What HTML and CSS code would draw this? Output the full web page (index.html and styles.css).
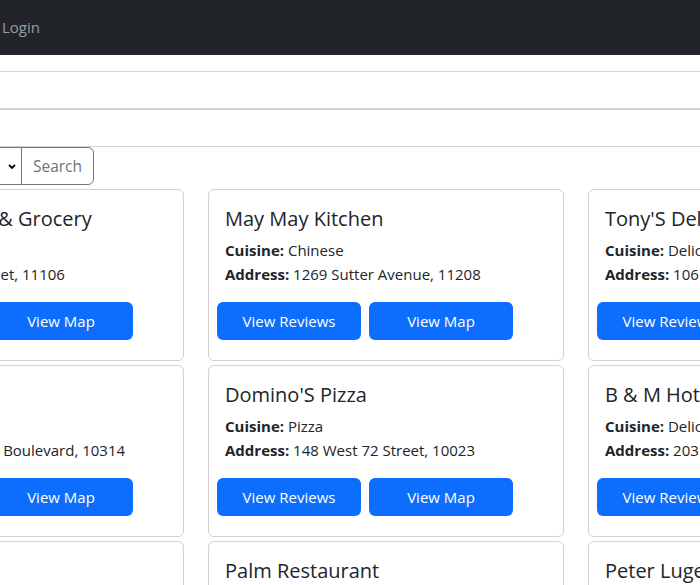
FILE: index.html
```html
<!DOCTYPE html>
<html lang="en">
<head>
<meta charset="utf-8">
<title>Restaurants</title>
<link rel="stylesheet" href="styles.css">
</head>
<body>
<div class="canvas">
  <nav class="navbar">
    <a class="brand" href="#">Restaurants</a>
    <a class="nav-link" href="#">Login</a>
  </nav>
  <main class="container">
    <form class="search-form">
      <input class="form-control" type="text" placeholder="Name">
      <input class="form-control" type="text" placeholder="Zipcode">
      <div class="input-group">
        <div class="select">
          <span class="select-text">All Cuisines</span>
          <svg class="chev" width="8" height="5" viewBox="0 0 8 5"><polyline points="1,1 4,4 7,1" fill="none" stroke="#000" stroke-width="1.8"/></svg>
        </div>
        <button type="button" class="btn-search">Search</button>
      </div>
    </form>
    <div class="cards">
      <div class="card">
        <h5 class="card-title">Broadway's Deli &amp; Grocery</h5>
        <p class="card-text"><b>Cuisine:</b> Delicatessen<br><b>Address:</b> 3015 31 Street, 11106</p>
        <div class="actions"><a class="btn">View Reviews</a><a class="btn">View Map</a></div>
      </div>
      <div class="card">
        <h5 class="card-title">May May Kitchen</h5>
        <p class="card-text"><b>Cuisine:</b> Chinese<br><b>Address:</b> 1269 Sutter Avenue, 11208</p>
        <div class="actions"><a class="btn">View Reviews</a><a class="btn">View Map</a></div>
      </div>
      <div class="card">
        <h5 class="card-title">Tony'S Deli</h5>
        <p class="card-text"><b>Cuisine:</b> Delicatessen<br><b>Address:</b> 1061 Atlantic Avenue, 11238</p>
        <div class="actions"><a class="btn">View Reviews</a><a class="btn">View Map</a></div>
      </div>
      <div class="card">
        <h5 class="card-title">Wendy'S</h5>
        <p class="card-text"><b>Cuisine:</b> Hamburgers<br><b>Address:</b> 1853 Victory Boulevard, 10314</p>
        <div class="actions"><a class="btn">View Reviews</a><a class="btn">View Map</a></div>
      </div>
      <div class="card">
        <h5 class="card-title">Domino'S Pizza</h5>
        <p class="card-text"><b>Cuisine:</b> Pizza<br><b>Address:</b> 148 West 72 Street, 10023</p>
        <div class="actions"><a class="btn">View Reviews</a><a class="btn">View Map</a></div>
      </div>
      <div class="card">
        <h5 class="card-title">B &amp; M Hot Bagel</h5>
        <p class="card-text"><b>Cuisine:</b> Delicatessen<br><b>Address:</b> 203 Columbus Avenue, 10023</p>
        <div class="actions"><a class="btn">View Reviews</a><a class="btn">View Map</a></div>
      </div>
      <div class="card">
        <h5 class="card-title">Carvel</h5>
        <p class="card-text"><b>Cuisine:</b> Ice Cream<br><b>Address:</b> 705 Kings Highway, 11223</p>
        <div class="actions"><a class="btn">View Reviews</a><a class="btn">View Map</a></div>
      </div>
      <div class="card">
        <h5 class="card-title">Palm Restaurant</h5>
        <p class="card-text"><b>Cuisine:</b> American<br><b>Address:</b> 837 2 Avenue, 10017</p>
        <div class="actions"><a class="btn">View Reviews</a><a class="btn">View Map</a></div>
      </div>
      <div class="card">
        <h5 class="card-title">Peter Luger Steakhouse</h5>
        <p class="card-text"><b>Cuisine:</b> Steak<br><b>Address:</b> 178 Broadway, 11211</p>
        <div class="actions"><a class="btn">View Reviews</a><a class="btn">View Map</a></div>
      </div>
    </div>
  </main>
</div>
</body>
</html>
```

FILE: styles.css
```css
html, body {
  margin: 0;
  padding: 0;
  overflow: hidden;
  background: #fff;
}
body {
  font-family: "Open Sans", "Noto Sans", sans-serif;
  font-size: 15px;
  line-height: 24px;
  color: #212529;
}
.canvas {
  width: 1140px;
  margin-left: -184px;
}
.navbar {
  height: 55px;
  background: #212529;
  display: flex;
  align-items: center;
}
.brand {
  width: 178px;
  color: #212529;
  text-decoration: none;
  font-size: 20px;
}
.nav-link {
  padding: 0 8px 2px;
  color: rgba(255, 255, 255, 0.55);
  text-decoration: none;
}
.container {
  padding: 16px 12px 0;
}
.search-form {
  display: flex;
  flex-direction: column;
}
.form-control {
  display: block;
  box-sizing: border-box;
  width: 100%;
  height: 38px;
  margin: 0;
  padding: 6px 12px;
  border: 1px solid #ced4da;
  border-radius: 6px;
  font: inherit;
  color: #212529;
}
.form-control::placeholder {
  color: #6c757d;
}
.input-group {
  display: flex;
  height: 38px;
}
.select {
  box-sizing: border-box;
  width: 194px;
  height: 38px;
  border: 1px solid #767676;
  border-radius: 6px 0 0 6px;
  display: flex;
  align-items: center;
  justify-content: space-between;
  padding: 0 5px 0 12px;
}
.chev {
  display: block;
}
.btn-search {
  box-sizing: border-box;
  width: 73px;
  height: 38px;
  margin-left: -1px;
  border: 1px solid #6c757d;
  border-radius: 0 6px 6px 0;
  background: #fff;
  color: #6c757d;
  font: inherit;
  font-size: 15.5px;
  padding: 0;
}
.cards {
  display: grid;
  grid-template-columns: repeat(3, 356px);
  column-gap: 24px;
  row-gap: 4px;
  padding-top: 4px;
}
.card {
  box-sizing: border-box;
  height: 172px;
  border: 1px solid rgba(0, 0, 0, 0.175);
  border-radius: 6px;
  padding: 16px 16px 20px;
  white-space: nowrap;
}
.card-title {
  margin: 0 0 7px;
  padding-top: 1px;
  font-size: 20px;
  font-weight: 500;
  line-height: 24px;
}
.card-text {
  margin: 0 0 16px;
}
.card-text b {
  font-weight: 700;
}
.actions {
  display: flex;
  gap: 8px;
  margin-left: -8px;
}
.btn {
  box-sizing: border-box;
  width: 144px;
  height: 38px;
  border-radius: 6px;
  background: #0d6efd;
  color: #fff;
  display: flex;
  align-items: center;
  justify-content: center;
  text-decoration: none;
}
```
